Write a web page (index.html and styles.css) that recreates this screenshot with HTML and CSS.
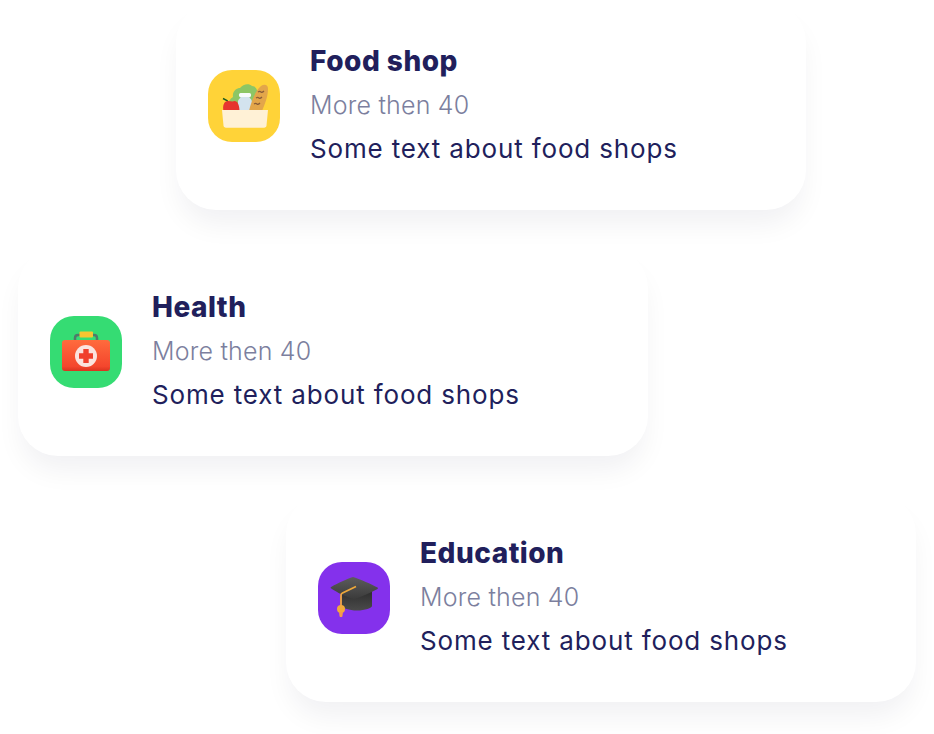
FILE: index.html
```html
<!DOCTYPE html>
<html lang="en">
<head>
<meta charset="utf-8">
<title>Categories</title>
<link rel="stylesheet" href="styles.css">
</head>
<body>
<main class="stack">
  <article class="card card-food">
    <div class="icon icon-food">
      <svg viewBox="0 0 72 72" width="72" height="72" aria-hidden="true">
        <path d="M22 41c-3-5-2-11 3-14-1-6 4-9 7-9 3-4 9-5 12-2 4 0 6 4 5 8 2 4 1 11-2 17z" fill="#8dc665"/>
        <path d="M33 26h8c0 2 3 3 3 6v9H30v-9c0-3 3-4 3-6z" fill="#d3e3ee"/>
        <rect x="31" y="23" width="12" height="4" rx="1.500" fill="#f7fbfd"/>
        <path d="M41 41c2-9 6-20 12-25 3-2 7-2 7 3 0 7-3 15-6 22z" fill="#e3a64a"/>
        <path d="M50 22c1.500-1 2-1 3 0s2 0 3-1M48 28c1.500-1 2-1 3 0s2 0 3-1M46 34c1.500-1 2-1 3 0s2 0 3-1" fill="none" stroke="#8a5d38" stroke-width="1.200"/>
        <path d="M15 28.500l4 2 1.500 2" fill="none" stroke="#1f5c22" stroke-width="1.400"/>
        <path d="M15.500 41c-1-5 0-10 5-10 2 0 4 1 6 0 3 0 5 4 5 10z" fill="#e6352f"/>
        <path d="M14 40h46l-1.500 15.500c-.2 1.300-1 2.200-2.500 2.200H18c-1.500 0-2.300-.9-2.500-2.200z" fill="#fff1d6"/>
      </svg>
    </div>
    <div class="copy">
      <h2 class="title">Food shop</h2>
      <p class="count">More then 40</p>
      <p class="text">Some text about food shops</p>
    </div>
  </article>
  <article class="card card-health">
    <div class="icon icon-health">
      <svg viewBox="0 0 72 72" width="72" height="72" aria-hidden="true">
        <defs>
          <linearGradient id="kit" x1="0" y1="0" x2="0" y2="1">
            <stop offset="0" stop-color="#ff6b3d"/>
            <stop offset=".85" stop-color="#f4462d"/>
            <stop offset="1" stop-color="#d9331f"/>
          </linearGradient>
        </defs>
        <path d="M25 25v-3c0-2 1-3 3-3h16c2 0 3 1 3 3v3" fill="none" stroke="#4f7a6a" stroke-width="2.500"/>
        <rect x="29.500" y="15.500" width="13.500" height="6" rx="1" fill="#f7c531"/>
        <rect x="12" y="24" width="48" height="31" rx="3" fill="url(#kit)"/>
        <circle cx="36" cy="40" r="11" fill="#fbe3de"/>
        <path d="M33.300 33h5.400v4.300H43v5.400h-4.300V47h-5.400v-4.300H29v-5.400h4.300z" fill="#f0402d"/>
      </svg>
    </div>
    <div class="copy">
      <h2 class="title">Health</h2>
      <p class="count">More then 40</p>
      <p class="text">Some text about food shops</p>
    </div>
  </article>
  <article class="card card-education">
    <div class="icon icon-education">
      <svg viewBox="0 0 72 72" width="72" height="72" aria-hidden="true">
        <defs>
          <linearGradient id="cap" x1="0" y1="0" x2="0" y2="1">
            <stop offset="0" stop-color="#5c5c5c"/>
            <stop offset="1" stop-color="#3b3b3b"/>
          </linearGradient>
          <linearGradient id="base" x1="0" y1="0" x2="0" y2="1">
            <stop offset="0" stop-color="#2f2f2f"/>
            <stop offset="1" stop-color="#4a4a4a"/>
          </linearGradient>
        </defs>
        <path d="M24 30v14c0 2 7 4.500 15 4.500s15-2.500 15-4.500V30z" fill="url(#base)"/>
        <path d="M12.500 26c0-.6.400-1 1-1.300C20 21 29 17 35 15c8 2.500 18 7 24.500 10.500.6.400.6 1 0 1.400C52 31 43 35 36 37c-8-2-17-6.500-23.500-11z" fill="url(#cap)"/>
        <path d="M38 24.500L24.500 31c-1 .5-1.500 1-1.500 2.200V44" fill="none" stroke="#eda83a" stroke-width="1.800"/>
        <circle cx="23" cy="47" r="4" fill="#f3a93c"/>
        <path d="M21 50h4l-.6 4.500c-.8.800-2 .8-2.800 0z" fill="#f59a4a"/>
      </svg>
    </div>
    <div class="copy">
      <h2 class="title">Education</h2>
      <p class="count">More then 40</p>
      <p class="text">Some text about food shops</p>
    </div>
  </article>
</main>
</body>
</html>
```
FILE: styles.css
```css
html, body {
  margin: 0;
  background: #fff;
}

.stack {
  display: flex;
  flex-direction: column;
  gap: 38px;
  padding: 2px 0 32px;
  font-family: "Inter", "Open Sans", sans-serif;
}

.card {
  box-sizing: border-box;
  width: 630px;
  height: 208px;
  padding: 0 32px;
  display: flex;
  align-items: center;
  gap: 30px;
  background: #fff;
  border-radius: 40px;
  box-shadow: 0 18px 28px -4px rgba(20, 20, 43, 0.06);
}

.card-food { margin-left: 176px; }
.card-health { margin-left: 18px; }
.card-education { margin-left: 286px; }

.icon {
  flex: none;
  width: 72px;
  height: 72px;
  border-radius: 24px;
  overflow: hidden;
}

.icon svg { display: block; }

.icon-food { background: #ffd338; }
.icon-health { background: #35dc73; }
.icon-education { background: #8431ec; }

.copy {
  display: flex;
  flex-direction: column;
  gap: 8px;
  padding-bottom: 2px;
  color: #211f5c;
}

.title {
  margin: 0;
  font-size: 28px;
  line-height: 36px;
  font-weight: 800;
  letter-spacing: 0.5px;
}

.count {
  margin: 0;
  font-size: 25px;
  line-height: 36px;
  font-weight: 300;
  letter-spacing: 0.2px;
  color: #7c7f9e;
}

.text {
  margin: 0;
  font-size: 26px;
  line-height: 36px;
  font-weight: 400;
  letter-spacing: 0.85px;
}
```
